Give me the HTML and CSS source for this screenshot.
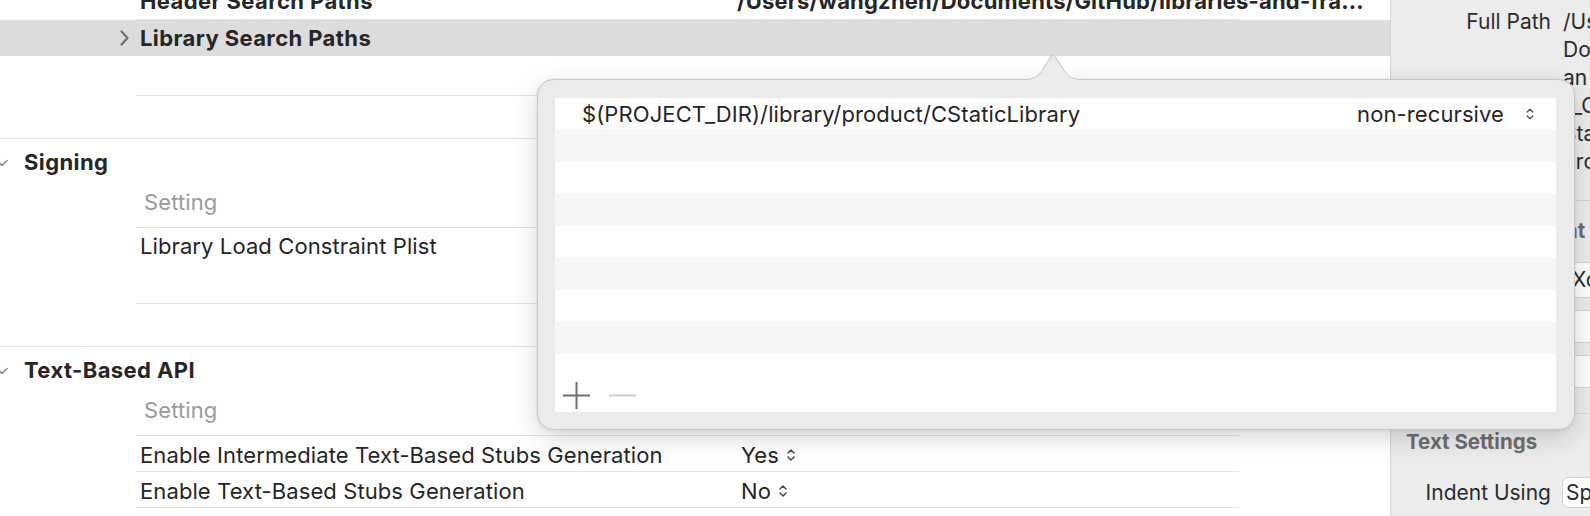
FILE: index.html
```html
<!DOCTYPE html>
<html>
<head>
<meta charset="utf-8">
<link rel="stylesheet" href="styles.css">
</head>
<body>
<div class="app">
  <main class="editor">
    <div class="row row-top">
      <div class="cell-name bold">Header Search Paths</div>
      <div class="cell-value bold value-path">/Users/wangzhen/Documents/GitHub/libraries-and-fra...</div>
    </div>
    <div class="row-selected">
      <svg class="chev-right" width="11" height="16" viewBox="0 0 11 16"><path d="M2.5 1.5 L8.5 8 L2.5 14.5" fill="none" stroke="#6f6f6f" stroke-width="2.2" stroke-linecap="round" stroke-linejoin="round"/></svg>
      <span class="bold">Library Search Paths</span>
    </div>
    <div class="row row-blank"></div>
    <div class="section-gap"></div>

    <section class="section">
      <div class="section-head">
        <svg class="chev-down" width="12" height="10" viewBox="0 0 12 10"><path d="M1 2.5 L6 7.5 L11 2.5" fill="none" stroke="#8c8c8c" stroke-width="1.6" stroke-linecap="round" stroke-linejoin="round"/></svg>
        <span class="bold">Signing</span>
      </div>
      <div class="row row-setting"><div class="cell-name setting">Setting</div></div>
      <div class="row row-tall"><div class="cell-name">Library Load Constraint Plist</div></div>
      <div class="section-gap"></div>
    </section>

    <section class="section">
      <div class="section-head">
        <svg class="chev-down" width="12" height="10" viewBox="0 0 12 10"><path d="M1 2.5 L6 7.5 L11 2.5" fill="none" stroke="#8c8c8c" stroke-width="1.6" stroke-linecap="round" stroke-linejoin="round"/></svg>
        <span class="bold">Text-Based API</span>
      </div>
      <div class="row row-setting"><div class="cell-name setting">Setting</div></div>
      <div class="row row-item">
        <div class="cell-name">Enable Intermediate Text-Based Stubs Generation</div>
        <div class="cell-value popup-value">Yes<svg class="stepper" width="10" height="14" viewBox="0 0 10 14"><path d="M2 5 L5 2 L8 5 M2 9 L5 12 L8 9" fill="none" stroke="#4a4a4a" stroke-width="1.5" stroke-linecap="round" stroke-linejoin="round"/></svg></div>
      </div>
      <div class="row row-item">
        <div class="cell-name">Enable Text-Based Stubs Generation</div>
        <div class="cell-value popup-value">No<svg class="stepper" width="10" height="14" viewBox="0 0 10 14"><path d="M2 5 L5 2 L8 5 M2 9 L5 12 L8 9" fill="none" stroke="#4a4a4a" stroke-width="1.5" stroke-linecap="round" stroke-linejoin="round"/></svg></div>
      </div>
    </section>
  </main>

  <aside class="inspector">
    <div class="insp-grid fullpath">
      <div class="insp-label">Full Path</div>
      <div class="insp-value">
        <div>/Users/wangzhen/</div>
        <div>Documents/GitHub/libraries-</div>
        <div>an</div>
        <div>__CStaticLibrary/</div>
        <div>StaticLibrary/</div>
        <div>product/libCStaticLibrary.a</div>
      </div>
    </div>
    <div class="insp-sep"></div>
    <div class="insp-head">Project Document</div>
    <div class="insp-grid insp-ctrl-row">
      <div class="insp-label">Project Format</div>
      <div class="insp-popup">Xcode 14.0-compatible</div>
    </div>
    <div class="insp-grid insp-field-row">
      <div class="insp-label">Organization</div>
      <div class="insp-field"></div>
    </div>
    <div class="insp-grid insp-field-row">
      <div class="insp-label">Class Prefix</div>
      <div class="insp-field"></div>
    </div>
    <div class="insp-sep insp-sep2"></div>
    <div class="insp-head insp-head2">Text Settings</div>
    <div class="insp-grid insp-indent">
      <div class="insp-label">Indent Using</div>
      <div class="insp-popup insp-popup-sm">Spaces</div>
    </div>
  </aside>
</div>

<div class="popover">
  <svg class="pop-arrow" width="60" height="27" viewBox="0 0 60 27">
    <path d="M0 25.5 C9.5 25.5 13.5 23 17.5 17 L26.5 3.2 Q29 -0.6 31.5 3.2 L40.5 17 C44.5 23 48.5 25.5 60 25.5 L60 27 L0 27 Z" fill="#ebebeb"/>
    <path d="M0 25.5 C9.5 25.5 13.5 23 17.5 17 L26.5 3.2 Q29 -0.6 31.5 3.2 L40.5 17 C44.5 23 48.5 25.5 60 25.5" fill="none" stroke="#c4c4c4" stroke-width="1"/>
  </svg>
  <div class="ptable">
    <div class="prow">
      <span class="ppath">$(PROJECT_DIR)/library/product/CStaticLibrary</span>
      <span class="pmode">non-recursive</span>
      <svg class="pstep" width="10" height="14" viewBox="0 0 10 14"><path d="M2.2 5 L5 2.2 L7.8 5 M2.2 9 L5 11.8 L7.8 9" fill="none" stroke="#555" stroke-width="1.4" stroke-linecap="round" stroke-linejoin="round"/></svg>
    </div>
    <div class="prow"></div>
    <div class="prow"></div>
    <div class="prow"></div>
    <div class="prow"></div>
    <div class="prow"></div>
    <div class="prow"></div>
    <div class="prow"></div>
    <div class="pfoot">
      <svg class="pbtn" width="27" height="27" viewBox="0 0 27 27"><path d="M13.5 0 V27 M0 13.5 H27" stroke="#6e6e6e" stroke-width="2"/></svg>
      <svg class="pbtn" width="27" height="27" viewBox="0 0 27 27"><path d="M0 13.5 H27" stroke="#cdcdcd" stroke-width="2"/></svg>
    </div>
  </div>
</div>
</body>
</html>
```

FILE: styles.css
```css
html, body {
  margin: 0;
  padding: 0;
  background: #ffffff;
}
body {
  width: 1590px;
  height: 516px;
  overflow: hidden;
  position: relative;
  font-family: "Inter", "Liberation Sans", sans-serif;
  font-size: 22px;
  letter-spacing: 0.1px;
  line-height: 24px;
  color: #262626;
}
.app {
  display: flex;
  height: 516px;
  overflow: hidden;
}
.editor {
  width: 1390px;
  flex: none;
  background: #fff;
}
.bold {
  font-weight: 700;
  letter-spacing: 0.4px;
}
.value-path {
  letter-spacing: 0.2px;
}
.row {
  margin-left: 136px;
  width: 1103px;
  box-sizing: border-box;
  border-bottom: 1px solid #e3e3e3;
  display: flex;
  align-items: flex-start;
}
.cell-name {
  width: 601px;
  box-sizing: border-box;
  padding-left: 4px;
  flex: none;
  white-space: nowrap;
}
.cell-value {
  display: flex;
  align-items: center;
  white-space: nowrap;
}
.popup-value {
  padding-left: 4px;
}
.setting {
  padding-left: 8px;
  color: #9a9a9a;
}
.row-top {
  margin-top: -17px;
  height: 37px;
  padding-top: 6px;
}
.row-selected {
  height: 36px;
  box-sizing: border-box;
  background: #dcdcdc;
  display: flex;
  align-items: center;
  padding-left: 119px;
}
.chev-right {
  margin-right: 10px;
  flex: none;
}
.row-blank {
  height: 40px;
}
.section-gap {
  height: 42px;
}
.section {
  border-top: 1px solid #e3e3e3;
}
.section-head {
  height: 46px;
  box-sizing: border-box;
  padding-top: 11px;
  display: flex;
  align-items: flex-start;
}
.chev-down {
  margin-left: -4px;
  margin-right: 16px;
  margin-top: 8px;
  flex: none;
}
.row-setting {
  height: 43px;
  padding-top: 5px;
}
.row-tall {
  height: 76px;
  padding-top: 6px;
}
.row-item {
  height: 36px;
  padding-top: 7px;
}
.stepper {
  margin-left: 7px;
}

/* inspector */
.inspector {
  width: 199px;
  flex: none;
  background: #ececec;
  border-left: 1px solid #d6d6d6;
  overflow: hidden;
  color: #2b2b2b;
  font-size: 21px;
  letter-spacing: 0;
}
.insp-grid {
  display: grid;
  grid-template-columns: 160px 300px;
  column-gap: 12px;
  align-items: center;
}
.insp-label {
  text-align: right;
  white-space: nowrap;
  justify-self: end;
}
.fullpath {
  padding-top: 8px;
  line-height: 28px;
  align-items: start;
}
.insp-value div {
  white-space: nowrap;
}
.insp-sep {
  margin: 24px 0 0 10px;
  border-top: 1px solid #d4d4d4;
}
.insp-head {
  margin-top: 17px;
  padding-left: 15px;
  font-weight: 700;
  color: #6e6e6e;
  font-size: 20.5px;
  line-height: 26px;
  white-space: nowrap;
}
.insp-ctrl-row {
  margin-top: 18px;
}
.insp-popup {
  height: 36px;
  box-sizing: border-box;
  background: #fff;
  border: 1px solid #d2d2d2;
  border-radius: 6px;
  padding-left: 9px;
  display: flex;
  align-items: center;
  white-space: nowrap;
  margin-left: -1px;
}
.insp-field-row {
  margin-top: 12px;
}
.insp-field {
  height: 33px;
  box-sizing: border-box;
  background: #fff;
  border: 1px solid #d2d2d2;
  margin-left: -1px;
}
.insp-sep2 {
  margin-top: 25px;
}
.insp-head2 {
  margin-top: 15px;
}
.insp-indent {
  margin-top: 22px;
}
.insp-popup-sm {
  height: 31px;
  padding-left: 3px;
}

/* popover */
.popover {
  position: absolute;
  left: 537px;
  top: 79px;
  width: 1038px;
  height: 351px;
  box-sizing: border-box;
  border: 1px solid #c6c6c6;
  border-radius: 16px;
  background: #ebebeb;
  padding: 18px 18px 17px 17px;
  box-shadow: 0 8px 26px rgba(0, 0, 0, 0.16), 0 1px 4px rgba(0, 0, 0, 0.06);
}
.pop-arrow {
  position: absolute;
  left: 486px;
  top: -26px;
}
.ptable {
  background: #fff;
  height: 100%;
  display: flex;
  flex-direction: column;
}
.prow {
  height: 32px;
  flex: none;
  display: flex;
  align-items: center;
  padding: 0 21px 0 27px;
}
.prow:nth-child(even) {
  background: #f4f5f5;
}
.ppath {
  white-space: nowrap;
}
.pmode {
  margin-left: auto;
  white-space: nowrap;
}
.pstep {
  margin-left: 21px;
}
.pfoot {
  flex: 1;
  display: flex;
  align-items: flex-end;
  gap: 19px;
  padding: 0 0 3px 8px;
}
```
